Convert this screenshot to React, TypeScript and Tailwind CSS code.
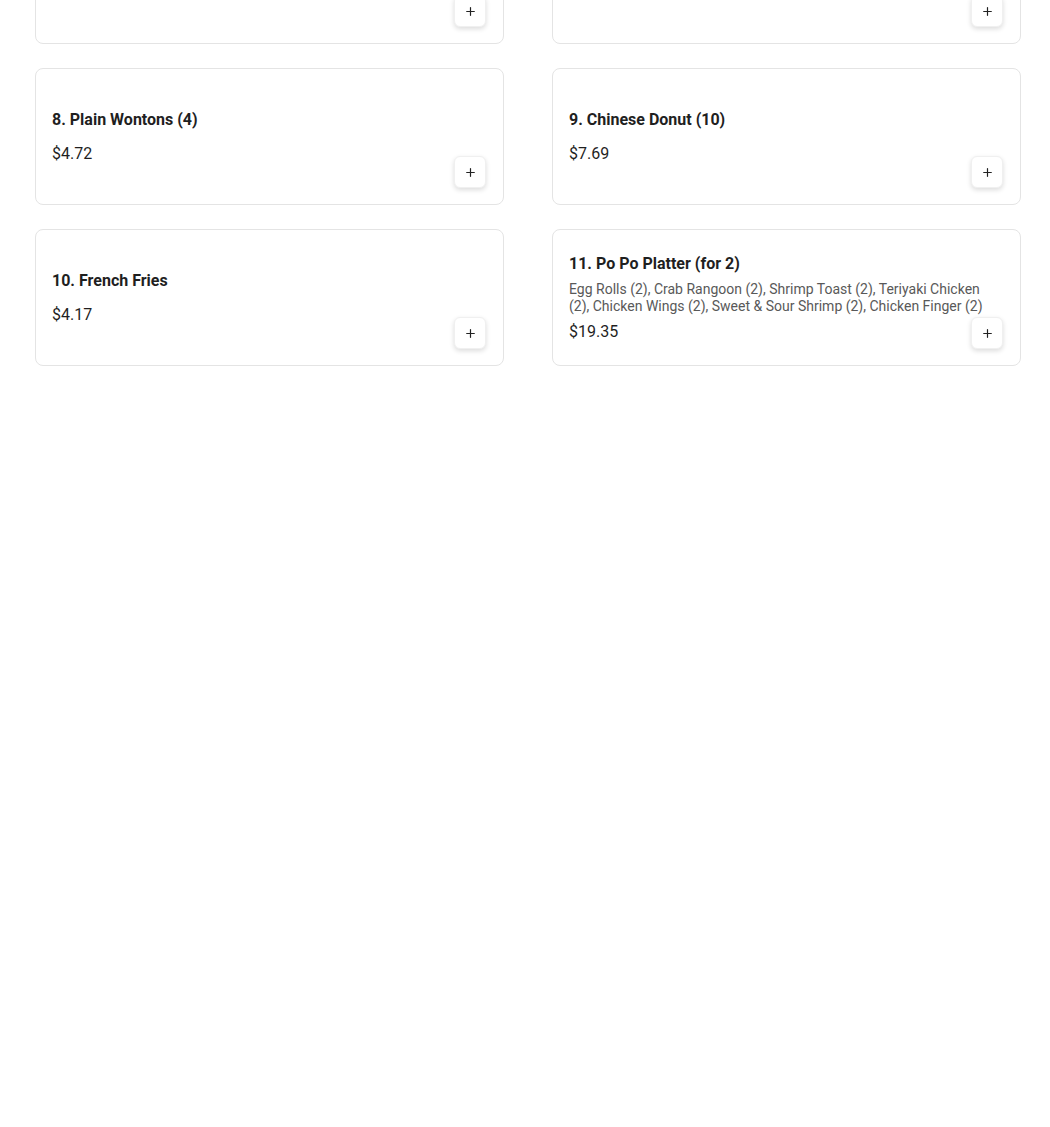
import { Plus } from "lucide-react";

type Item = { name: string; price: string; desc?: string };

const items: Item[] = [
    { name: "6. Crab Rangoon (6)", price: "$6.59" },
    { name: "7. Fried Wontons (10)", price: "$5.49" },
    { name: "8. Plain Wontons (4)", price: "$4.72" },
    { name: "9. Chinese Donut (10)", price: "$7.69" },
    { name: "10. French Fries", price: "$4.17" },
    {
        name: "11. Po Po Platter (for 2)",
        price: "$19.35",
        desc: "Egg Rolls (2), Crab Rangoon (2), Shrimp Toast (2), Teriyaki Chicken (2), Chicken Wings (2), Sweet & Sour Shrimp (2), Chicken Finger (2)",
    },
];

function MenuCard({ item }: { item: Item }) {
    return (
        <div className="relative h-[137px] rounded-lg border border-[#e4e4e4] bg-white px-4 flex flex-col justify-center gap-[5px]">
            <div className="text-base leading-6 font-bold text-[#1f1f1f]">{item.name}</div>
            <div className="text-[14px] leading-[17px] text-[#595959] pr-1">{item.desc}</div>
            <div className="text-base leading-6 text-[#1f1f1f]">{item.price}</div>
            {/* add button */}
            <button className="absolute right-[17px] bottom-4 w-8 h-8 rounded-md bg-white border border-[#f0f0f0] shadow-[0_2px_5px_rgba(0,0,0,0.14)] flex items-center justify-center text-[#222]">
                <Plus size={13} strokeWidth={2.2} />
            </button>
        </div>
    );
}

export default function App() {
    return (
        <div className="min-h-[1127px] bg-white overflow-hidden" style={{ fontFamily: "Roboto, 'Liberation Sans', sans-serif" }}>
            <div className="-mt-[93px] pl-[35px] grid grid-cols-[469px_469px] gap-x-12 gap-y-6">
                {items.map((item) => (
                    <MenuCard key={item.name} item={item} />
                ))}
            </div>
        </div>
    );
}
